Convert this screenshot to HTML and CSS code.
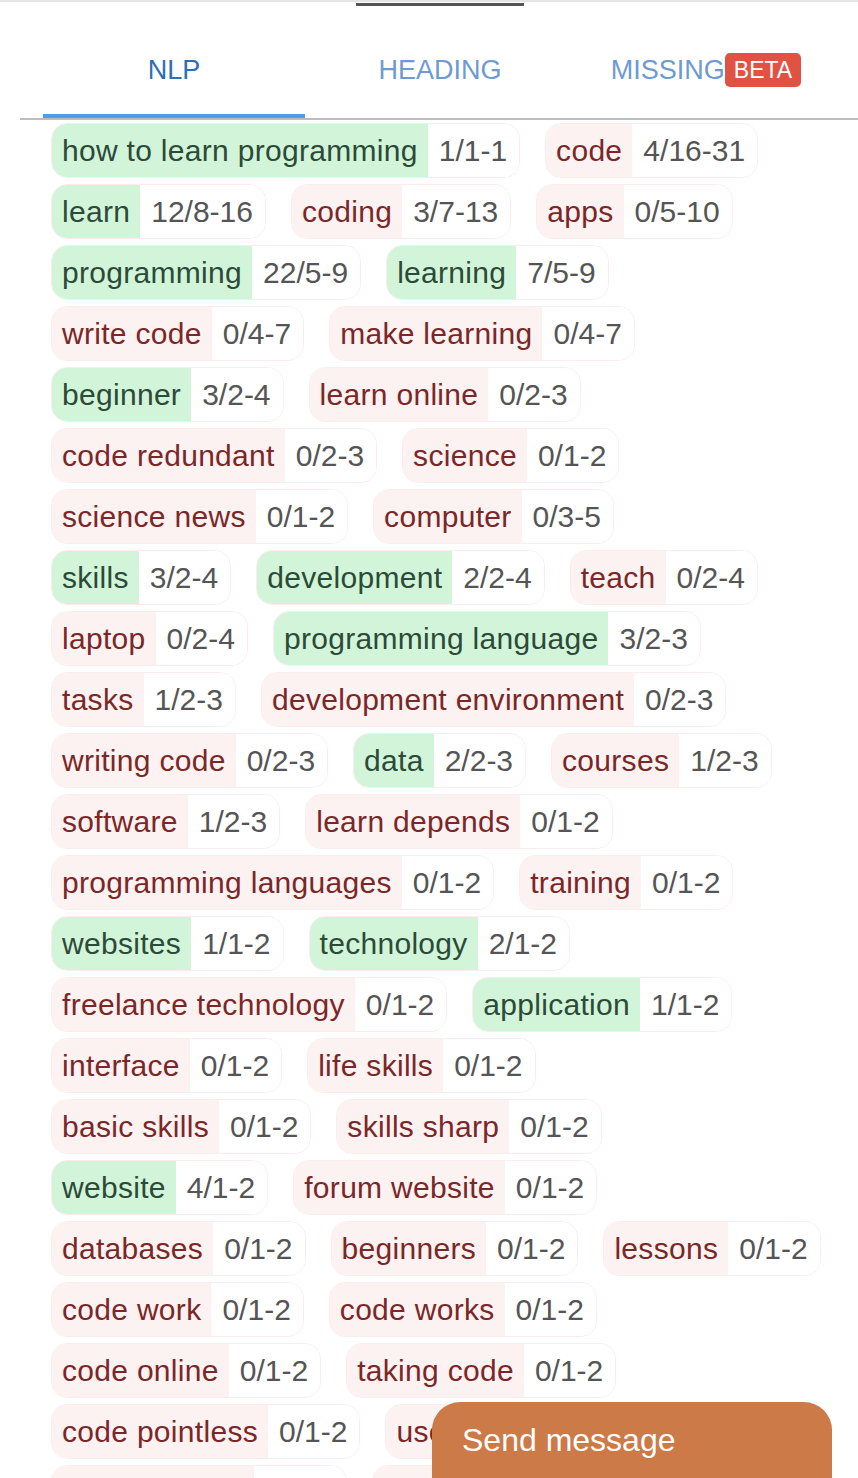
FILE: index.html
```html
<!DOCTYPE html>
<html lang="en">
<head>
  <meta charset="UTF-8">
  <title>Keywords</title>
  <meta name="viewport" content="width=device-width, initial-scale=1.0">
  <link rel="stylesheet" href="styles.css">
</head>
<body>
  <div class="top-line"></div>
  <div class="handle"></div>

  <div class="panel">
    <div class="tabs">
      <div class="tab active">NLP</div>
      <div class="tab">HEADING</div>
      <div class="tab">MISSING<span class="beta">BETA</span></div>
    </div>

    <div class="tag-list">
      <div class="tag-row">
        <span class="tag found"><span class="word">how to learn programming</span><span class="count">1/1-1</span></span>
        <span class="tag"><span class="word">code</span><span class="count">4/16-31</span></span>
      </div>
      <div class="tag-row">
        <span class="tag found"><span class="word">learn</span><span class="count">12/8-16</span></span>
        <span class="tag"><span class="word">coding</span><span class="count">3/7-13</span></span>
        <span class="tag"><span class="word">apps</span><span class="count">0/5-10</span></span>
      </div>
      <div class="tag-row">
        <span class="tag found"><span class="word">programming</span><span class="count">22/5-9</span></span>
        <span class="tag found"><span class="word">learning</span><span class="count">7/5-9</span></span>
      </div>
      <div class="tag-row">
        <span class="tag"><span class="word">write code</span><span class="count">0/4-7</span></span>
        <span class="tag"><span class="word">make learning</span><span class="count">0/4-7</span></span>
      </div>
      <div class="tag-row">
        <span class="tag found"><span class="word">beginner</span><span class="count">3/2-4</span></span>
        <span class="tag"><span class="word">learn online</span><span class="count">0/2-3</span></span>
      </div>
      <div class="tag-row">
        <span class="tag"><span class="word">code redundant</span><span class="count">0/2-3</span></span>
        <span class="tag"><span class="word">science</span><span class="count">0/1-2</span></span>
      </div>
      <div class="tag-row">
        <span class="tag"><span class="word">science news</span><span class="count">0/1-2</span></span>
        <span class="tag"><span class="word">computer</span><span class="count">0/3-5</span></span>
      </div>
      <div class="tag-row">
        <span class="tag found"><span class="word">skills</span><span class="count">3/2-4</span></span>
        <span class="tag found"><span class="word">development</span><span class="count">2/2-4</span></span>
        <span class="tag"><span class="word">teach</span><span class="count">0/2-4</span></span>
      </div>
      <div class="tag-row">
        <span class="tag"><span class="word">laptop</span><span class="count">0/2-4</span></span>
        <span class="tag found"><span class="word">programming language</span><span class="count">3/2-3</span></span>
      </div>
      <div class="tag-row">
        <span class="tag"><span class="word">tasks</span><span class="count">1/2-3</span></span>
        <span class="tag"><span class="word">development environment</span><span class="count">0/2-3</span></span>
      </div>
      <div class="tag-row">
        <span class="tag"><span class="word">writing code</span><span class="count">0/2-3</span></span>
        <span class="tag found"><span class="word">data</span><span class="count">2/2-3</span></span>
        <span class="tag"><span class="word">courses</span><span class="count">1/2-3</span></span>
      </div>
      <div class="tag-row">
        <span class="tag"><span class="word">software</span><span class="count">1/2-3</span></span>
        <span class="tag"><span class="word">learn depends</span><span class="count">0/1-2</span></span>
      </div>
      <div class="tag-row">
        <span class="tag"><span class="word">programming languages</span><span class="count">0/1-2</span></span>
        <span class="tag"><span class="word">training</span><span class="count">0/1-2</span></span>
      </div>
      <div class="tag-row">
        <span class="tag found"><span class="word">websites</span><span class="count">1/1-2</span></span>
        <span class="tag found"><span class="word">technology</span><span class="count">2/1-2</span></span>
      </div>
      <div class="tag-row">
        <span class="tag"><span class="word">freelance technology</span><span class="count">0/1-2</span></span>
        <span class="tag found"><span class="word">application</span><span class="count">1/1-2</span></span>
      </div>
      <div class="tag-row">
        <span class="tag"><span class="word">interface</span><span class="count">0/1-2</span></span>
        <span class="tag"><span class="word">life skills</span><span class="count">0/1-2</span></span>
      </div>
      <div class="tag-row">
        <span class="tag"><span class="word">basic skills</span><span class="count">0/1-2</span></span>
        <span class="tag"><span class="word">skills sharp</span><span class="count">0/1-2</span></span>
      </div>
      <div class="tag-row">
        <span class="tag found"><span class="word">website</span><span class="count">4/1-2</span></span>
        <span class="tag"><span class="word">forum website</span><span class="count">0/1-2</span></span>
      </div>
      <div class="tag-row">
        <span class="tag"><span class="word">databases</span><span class="count">0/1-2</span></span>
        <span class="tag"><span class="word">beginners</span><span class="count">0/1-2</span></span>
        <span class="tag"><span class="word">lessons</span><span class="count">0/1-2</span></span>
      </div>
      <div class="tag-row">
        <span class="tag"><span class="word">code work</span><span class="count">0/1-2</span></span>
        <span class="tag"><span class="word">code works</span><span class="count">0/1-2</span></span>
      </div>
      <div class="tag-row">
        <span class="tag"><span class="word">code online</span><span class="count">0/1-2</span></span>
        <span class="tag"><span class="word">taking code</span><span class="count">0/1-2</span></span>
      </div>
      <div class="tag-row">
        <span class="tag"><span class="word">code pointless</span><span class="count">0/1-2</span></span>
        <span class="tag"><span class="word">useless code</span><span class="count">0/1-2</span></span>
      </div>
      <div class="tag-row">
        <span class="tag"><span class="word">code practice</span><span class="count">0/1-2</span></span>
        <span class="tag"><span class="word">coders</span><span class="count">0/1-2</span></span>
      </div>
    </div>
  </div>

  <button class="send-button">Send message</button>
</body>
</html>
```

FILE: styles.css
```css
html, body {
  margin: 0;
  padding: 0;
}
body {
  font-family: "Liberation Sans", Arial, sans-serif;
  background: #fff;
  color: #333;
  overflow: hidden;
  height: 1478px;
}
.top-line {
  height: 2px;
  background: #e6e6e6;
}
.handle {
  width: 168px;
  height: 3px;
  margin: 1px 0 0 356px;
  background: #555;
}

/* tabs */
.panel {
  margin-left: 20px;
}
.tabs {
  display: flex;
  gap: 4px;
  padding-left: 23px;
  border-bottom: 2px solid #bdbdbd;
}
.tab {
  width: 262px;
  height: 112px;
  box-sizing: border-box;
  padding-top: 20px;
  border-bottom: 4px solid transparent;
  display: flex;
  align-items: center;
  justify-content: center;
  font-size: 27px;
  color: #6d9bd1;
}
.tab.active {
  color: #2f6db5;
  border-bottom-color: #4d9de9;
}
.tab .beta {
  margin-left: 0;
  padding: 0 9px;
  height: 34px;
  line-height: 34px;
  border-radius: 5px;
  background: #e05342;
  color: #fff;
  font-size: 23px;
}

/* keyword tags */
.tag-list {
  padding: 3px 0 0 31px;
  display: flex;
  flex-direction: column;
  gap: 6px;
}
.tag-row {
  display: flex;
  gap: 25px;
}
.tag {
  display: flex;
  height: 55px;
  box-sizing: border-box;
  border: 1px solid #fbeded;
  border-radius: 16px;
  overflow: hidden;
  font-size: 30px;
  line-height: 53px;
  white-space: nowrap;
}
.tag .word {
  padding: 0 10px;
  letter-spacing: 0.3px;
  background: #fdf2f2;
  color: #7b2727;
}
.tag.found .word {
  background: #d2f5d9;
  color: #2c4a38;
}
.tag .count {
  padding: 0 12px 0 11px;
  background: #fff;
  color: #555;
}

/* floating message button */
.send-button {
  position: fixed;
  right: 26px;
  bottom: 0;
  width: 400px;
  height: 76px;
  padding: 0 0 0 30px;
  border: none;
  border-radius: 28px 28px 0 0;
  background: #cc7a48;
  color: #fff;
  font-family: "Liberation Sans", Arial, sans-serif;
  font-size: 32px;
  text-align: left;
  cursor: pointer;
}
```
